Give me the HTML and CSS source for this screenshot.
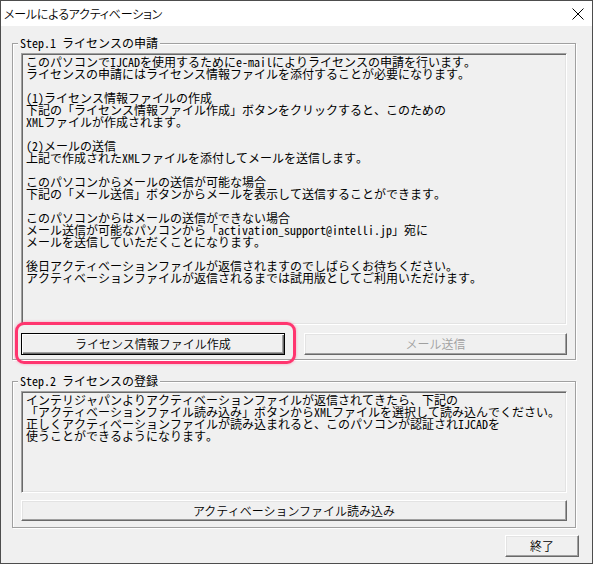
FILE: index.html
```html
<!DOCTYPE html>
<html lang="ja">
<head>
    <meta charset="UTF-8">
    <title>メールによるアクティベーション</title>
    <link rel="stylesheet" href="styles.css">
</head>
<body>

    <div class="window">
        <div class="titlebar">
            <span class="title">メールによるアクティベーション</span>
            <span class="close-btn">
                <svg width="12" height="12" viewBox="0 0 12 12"><path d="M0.5 0.5 L11.5 11.5 M11.5 0.5 L0.5 11.5" stroke="#000" stroke-width="1" fill="none"/></svg>
            </span>
        </div>

        <div class="dialog">
            <div class="group group-apply">
                <div class="group-label">Step.1 ライセンスの申請</div>
                <div class="memo memo-apply">このパソコンでIJCADを使用するためにe-mailによりライセンスの申請を行います。
ライセンスの申請にはライセンス情報ファイルを添付することが必要になります。

(1)ライセンス情報ファイルの作成
下記の「ライセンス情報ファイル作成」ボタンをクリックすると、このための
XMLファイルが作成されます。

(2)メールの送信
上記で作成されたXMLファイルを添付してメールを送信します。

このパソコンからメールの送信が可能な場合
下記の「メール送信」ボタンからメールを表示して送信することができます。

このパソコンからはメールの送信ができない場合
メール送信が可能なパソコンから「activation_support@intelli.jp」宛に
メールを送信していただくことになります。

後日アクティベーションファイルが返信されますのでしばらくお待ちください。
アクティベーションファイルが返信されるまでは試用版としてご利用いただけます。</div>
                <div class="btn-row">
                    <div class="highlight">
                        <button class="btn btn-default">ライセンス情報ファイル作成</button>
                    </div>
                    <button class="btn" disabled>メール送信</button>
                </div>
            </div>

            <div class="group group-register">
                <div class="group-label">Step.2 ライセンスの登録</div>
                <div class="memo memo-register">インテリジャパンよりアクティベーションファイルが返信されてきたら、下記の
「アクティベーションファイル読み込み」ボタンからXMLファイルを選択して読み込んでください。
正しくアクティベーションファイルが読み込まれると、このパソコンが認証されIJCADを
使うことができるようになります。</div>
                <button class="btn btn-wide">アクティベーションファイル読み込み</button>
            </div>

            <div class="footer">
                <button class="btn btn-close">終了</button>
            </div>
        </div>
    </div>

</body>
</html>
```

FILE: styles.css
```css
body {
    margin: 0;
    padding: 0;
    background-color: #f0f0f0;
    font-family: "Noto Sans CJK JP", sans-serif;
    font-size: 12px;
    color: #000;
}

.window {
    width: 593px;
    height: 564px;
    box-sizing: border-box;
    border: 1px solid #4d4d4d;
    background-color: #f0f0f0;
    display: flex;
    flex-direction: column;
}

.titlebar {
    height: 25px;
    background-color: #fff;
    display: flex;
    align-items: center;
    justify-content: space-between;
    padding: 0 8px 0 3px;
}

.title {
    font-size: 12px;
    line-height: 14px;
    font-weight: 350;
    font-feature-settings: "palt";
    letter-spacing: -0.2px;
}

.close-btn {
    display: flex;
    margin-top: 1px;
}

.dialog {
    flex: 1;
    padding: 0 16px 0 11px;
}

.group {
    position: relative;
    border: 1px solid #a0a0a0;
    box-shadow: inset 1px 1px 0 #fff, 1px 1px 0 #fff;
    padding: 9px 8px 4px 8px;
}

.group-apply {
    margin-top: 17px;
}

.group-register {
    margin-top: 21px;
    padding-bottom: 6px;
}

.group-label {
    position: absolute;
    top: -7px;
    left: 5px;
    padding: 0 2px;
    background-color: #f0f0f0;
    line-height: 12px;
    font-family: "Noto Sans Mono CJK JP", "Noto Sans CJK JP", monospace;
    font-feature-settings: "hwid";
}

.memo {
    box-sizing: border-box;
    border: 1px solid;
    border-color: #a0a0a0 #fff #fff #a0a0a0;
    box-shadow: inset 1px 1px 0 #696969, inset -1px -1px 0 #e3e3e3;
    padding: 2px 4px;
    white-space: pre-line;
    line-height: 12px;
    font-family: "Noto Sans Mono CJK JP", "Noto Sans CJK JP", monospace;
    font-feature-settings: "hwid";
    overflow: hidden;
}

.memo-apply {
    height: 272px;
}

.memo-register {
    height: 102px;
}

.btn-row {
    display: grid;
    grid-template-columns: 264px 1fr;
    gap: 19px;
    margin-top: 8px;
}

.btn {
    display: block;
    width: 100%;
    height: 22px;
    margin: 0;
    padding: 0;
    box-sizing: border-box;
    background-color: #f0f0f0;
    border: 1px solid;
    border-color: #fff #696969 #696969 #fff;
    box-shadow: inset -1px -1px 0 #a0a0a0, inset 1px 1px 0 #e3e3e3;
    font-family: "Noto Sans CJK JP", sans-serif;
    font-size: 12px;
    font-weight: 350;
    line-height: 12px;
    color: #000;
}

.btn:disabled {
    color: #a0a0a0;
}

.btn-default {
    border-color: #000;
    box-shadow: inset 1px 1px 0 #fff, inset -1px -1px 0 #696969, inset -2px -2px 0 #a0a0a0;
}

.highlight {
    position: relative;
}

.highlight::after {
    content: "";
    position: absolute;
    left: -6px;
    right: -11px;
    top: -11px;
    bottom: -9px;
    border: 3px solid #ff356f;
    border-radius: 9px;
    box-shadow: 0 0 3px rgba(255, 53, 111, 0.4);
    pointer-events: none;
}

.btn-wide {
    height: 21px;
    margin-top: 7px;
}

.footer {
    display: flex;
    justify-content: flex-end;
    margin-top: 7px;
    margin-right: -3px;
}

.btn-close {
    width: 74px;
}
```
